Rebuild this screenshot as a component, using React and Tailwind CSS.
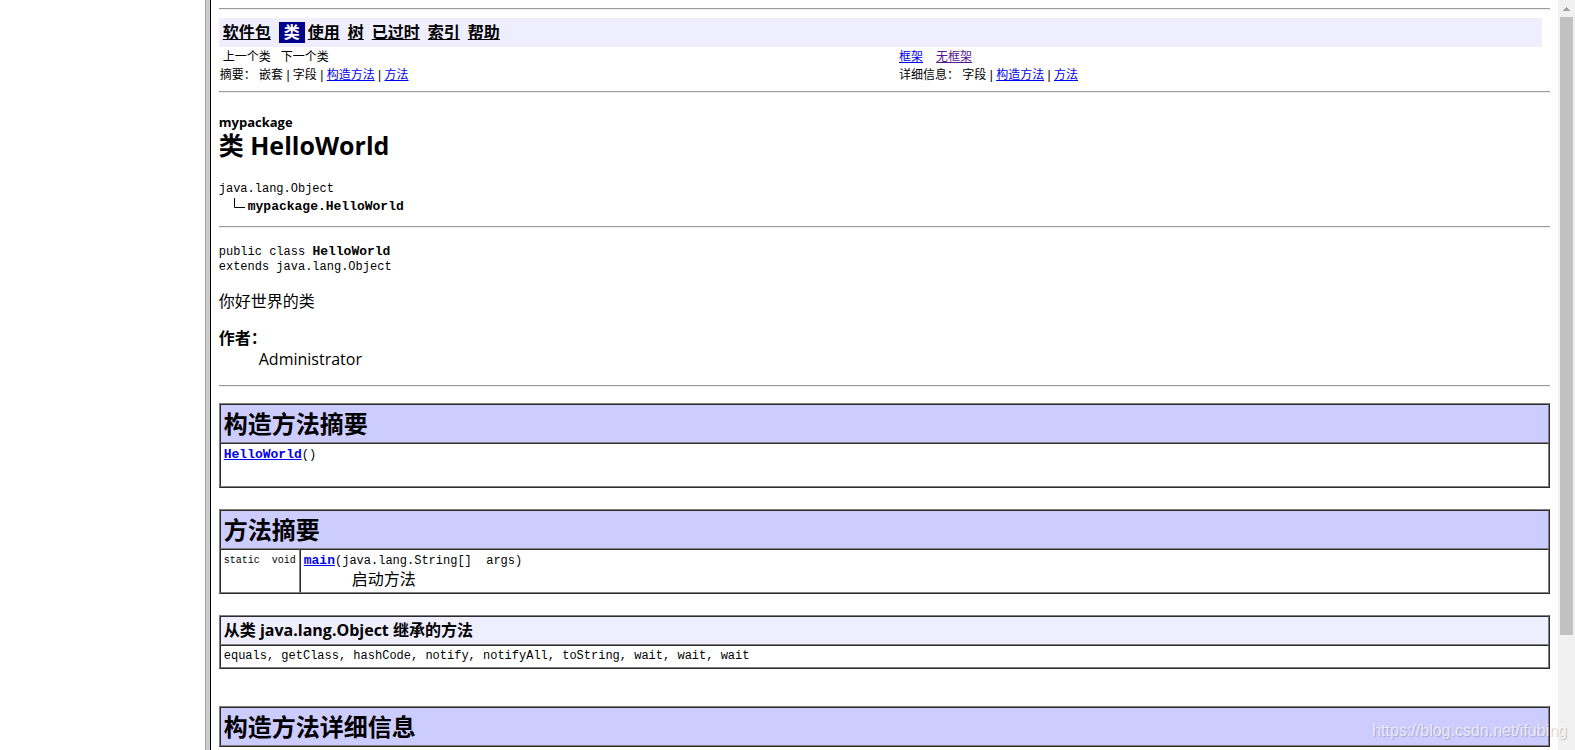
import React from "react";

const NAV_ITEMS = ["软件包", "类", "使用", "树", "已过时", "索引", "帮助"];

const TABLE =
  "w-full border-separate border-spacing-0 border border-t-[#808080] border-l-[#808080] border-r-[#2c2c2c] border-b-[#2c2c2c]";
const CELL =
  "border border-t-[#2c2c2c] border-l-[#2c2c2c] border-r-[#808080] border-b-[#808080] p-[3px] text-left align-top";
const MONO = "font-['Liberation_Mono','Noto_Sans_CJK_SC',monospace] text-xs leading-[15px]";
const MONO_BOLD = "text-[13px] font-bold leading-[15px]";
const LINK = "text-[#0000ee] underline";

function Rule({ className = "" }) {
  return <hr className={`h-[2px] border-0 border-t border-b border-t-[#9a9a9a] border-b-[#eeeeee] ${className}`} />;
}

function HeadingCell({ children, colSpan }) {
  return (
    <th colSpan={colSpan} className={`${CELL} bg-[#ccccff]`}>
      <h2 className="text-2xl leading-[31px] font-bold">{children}</h2>
    </th>
  );
}

function NavBar() {
  return (
    <nav>
      <ul className="mr-2 flex gap-[3px] bg-[#eeeeff] px-1 py-1 text-base leading-[21px] font-bold">
        {NAV_ITEMS.map((item) =>
          item === "类" ? (
            <li key={item} className="bg-[#00008b] px-[5px] text-white">
              {item}
            </li>
          ) : (
            <li key={item} className="pr-[5px]">
              <a href="#" className="underline">
                {item}
              </a>
            </li>
          )
        )}
      </ul>
      <div className="grid grid-cols-[51.1%_1fr] pt-px font-['Liberation_Sans','Noto_Sans_CJK_SC',sans-serif] text-xs leading-[18px]">
        <p className="flex gap-[10px] pl-1">
          <span>上一个类</span>
          <span>下一个类</span>
        </p>
        <p className="flex gap-[13px]">
          <a href="#" className={LINK}>框架</a>
          <a href="#" className="text-[#551a8b] underline">无框架</a>
        </p>
        <p className="pl-px">
          摘要：&nbsp;嵌套 | 字段 | <a href="#c" className={LINK}>构造方法</a> | <a href="#m" className={LINK}>方法</a>
        </p>
        <p>
          详细信息：&nbsp;字段 | <a href="#cd" className={LINK}>构造方法</a> | <a href="#m" className={LINK}>方法</a>
        </p>
      </div>
    </nav>
  );
}

function ClassHeader() {
  return (
    <header className="mt-5">
      <p className="text-[13px] leading-[18px] font-bold">mypackage</p>
      <h1 className="text-[25px] leading-7 font-bold">类 HelloWorld</h1>
      <div className={`${MONO} mt-[22px]`}>
        <p className="leading-[17px]">java.lang.Object</p>
        <p className="flex pl-[14px]">
          <svg width="15" height="17" viewBox="0 0 15 17" fill="none" stroke="#000" aria-hidden="true">
            <path d="M1.5 -1V9.5H12" />
          </svg>
          <b className="text-[13px] leading-[17px]">mypackage.HelloWorld</b>
        </p>
      </div>
    </header>
  );
}

function Scrollbar() {
  return (
    <div className="flex w-[17px] shrink-0 flex-col items-center bg-[#f1f1f1]" aria-hidden="true">
      <svg width="17" height="17" viewBox="0 0 17 17" className="shrink-0">
        <path d="M8 7h1v1h1v1h1v1h1v1H5v-1h1V9h1V8h1z" fill="#a3a3a3" />
      </svg>
      <div className="h-[82.4%] w-[13px] bg-[#c1c1c1]" />
    </div>
  );
}

export default function App() {
  return (
    <div className="relative flex h-screen overflow-hidden bg-white font-['Open_Sans','Noto_Sans_CJK_SC',sans-serif] text-base text-black">
      <aside className="w-[13%] shrink-0" />
      <div className="w-[6px] shrink-0 border-r border-l border-l-[#a0a0a0] border-r-black bg-[#cccccc]" />
      <main className="min-w-0 flex-1 overflow-hidden p-2">
        <Rule className="mb-2" />
        <NavBar />
        <Rule className="mt-[7px]" />
        <ClassHeader />
        <Rule className="mt-[11px]" />

        <div className={`${MONO} mt-4`}>
          <p>
            public class <b className={MONO_BOLD}>HelloWorld</b>
          </p>
          <p>extends java.lang.Object</p>
        </div>
        <p className="mt-[15px] leading-[22px]">你好世界的类</p>
        <dl className="mt-4 leading-[21px]">
          <dt className="font-bold">作者：</dt>
          <dd className="pl-10">Administrator</dd>
        </dl>
        <Rule className="mt-[15px]" />

        <table id="c" className={`${TABLE} mt-4`}>
          <thead>
            <tr>
              <HeadingCell>构造方法摘要</HeadingCell>
            </tr>
          </thead>
          <tbody>
            <tr>
              <td className={CELL}>
                <p className={`${MONO} pb-5`}>
                  <a href="#cd" className={`${LINK} ${MONO_BOLD}`}>HelloWorld</a>()
                </p>
              </td>
            </tr>
          </tbody>
        </table>

        <table id="m" className={`${TABLE} mt-[21px]`}>
          <thead>
            <tr>
              <HeadingCell colSpan={2}>方法摘要</HeadingCell>
            </tr>
          </thead>
          <tbody>
            <tr>
              <td className={`${CELL} w-20`}>
                <p className="text-right font-['Liberation_Mono',monospace] text-[10px] leading-[15px] whitespace-nowrap">
                  static&nbsp;&nbsp;void
                </p>
              </td>
              <td className={CELL}>
                <p className={MONO}>
                  <a href="#m" className={`${LINK} ${MONO_BOLD}`}>main</a>(java.lang.String[]&nbsp;&nbsp;args)
                </p>
                <p className="pl-12 leading-5">启动方法</p>
              </td>
            </tr>
          </tbody>
        </table>

        <table className={`${TABLE} mt-[21px]`}>
          <thead>
            <tr>
              <th className={`${CELL} bg-[#eeeeff] leading-[21px] font-bold`}>从类 java.lang.Object 继承的方法</th>
            </tr>
          </thead>
          <tbody>
            <tr>
              <td className={CELL}>
                <p className={MONO}>equals, getClass, hashCode, notify, notifyAll, toString, wait, wait, wait</p>
              </td>
            </tr>
          </tbody>
        </table>

        <table id="cd" className={`${TABLE} mt-[37px]`}>
          <thead>
            <tr>
              <HeadingCell>构造方法详细信息</HeadingCell>
            </tr>
          </thead>
        </table>
      </main>
      <Scrollbar />
      <p className="absolute right-2 bottom-[7px] font-['Liberation_Sans',sans-serif] text-base text-white/70 [text-shadow:1px_1px_1px_rgba(0,0,0,0.2)]">
        https://blog.csdn.net/ifubing
      </p>
    </div>
  );
}
